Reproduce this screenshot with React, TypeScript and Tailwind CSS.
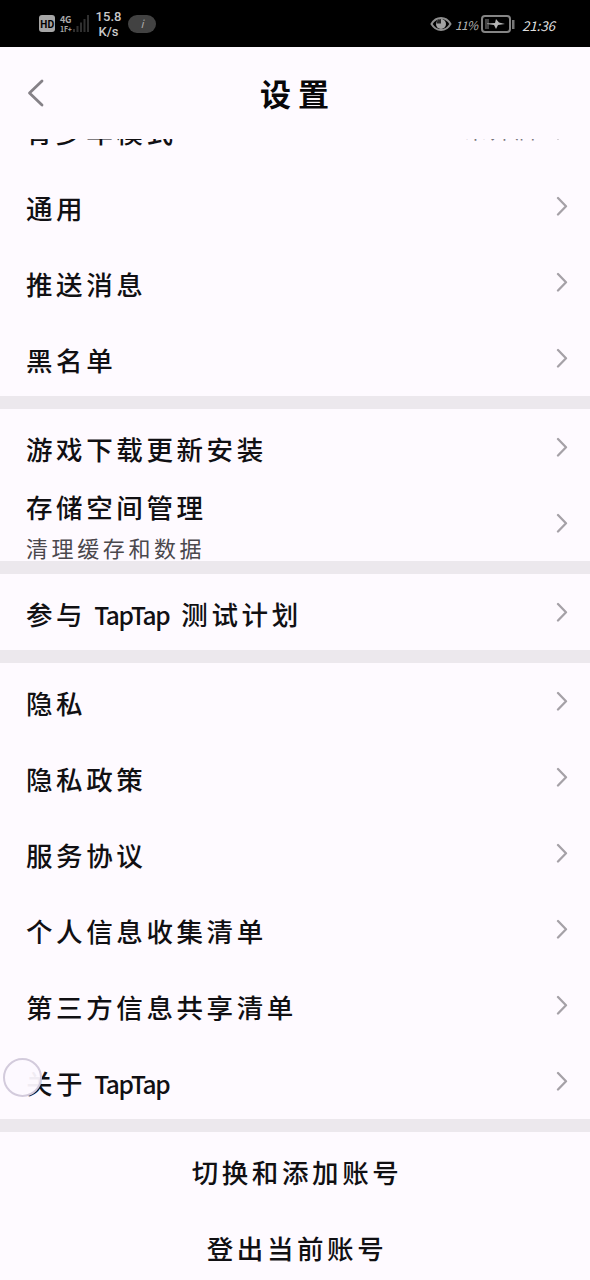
import { Fragment } from "react";

type Row = { label: string; desc?: string; value?: string };

const groups: Row[][] = [
  [{ label: "青少年模式", value: "未开启" }, { label: "通用" }, { label: "推送消息" }, { label: "黑名单" }],
  [{ label: "游戏下载更新安装" }, { label: "存储空间管理", desc: "清理缓存和数据" }],
  [{ label: "参与 TapTap 测试计划" }],
  [
    { label: "隐私" },
    { label: "隐私政策" },
    { label: "服务协议" },
    { label: "个人信息收集清单" },
    { label: "第三方信息共享清单" },
    { label: "关于 TapTap" },
  ],
];

const actions = ["切换和添加账号", "登出当前账号"];

function Chevron() {
  return (
    <svg width="12" height="20" viewBox="0 0 12 20" fill="none" className="shrink-0">
      <path d="M2 2 10 10.300 2 18.500" stroke="#a5a1a7" strokeWidth="2.300" strokeLinecap="round" strokeLinejoin="round" />
    </svg>
  );
}

function Label({ text }: { text: string }) {
  const parts = text.split(/ ?(TapTap) ?/);
  return (
    <span className="flex items-baseline text-[26.5px] leading-[36px] font-medium tracking-[3.6px] whitespace-nowrap text-[#111013]">
      {parts.map((part, i) =>
        part === "TapTap" ? (
          <span key={i} className="mr-3 ml-2 text-[24.5px] tracking-[-1.4px]">
            {part}
          </span>
        ) : (
          <span key={i}>{part}</span>
        )
      )}
    </span>
  );
}

function SettingsRow({ label, desc, value }: Row) {
  return (
    <div className="flex h-[76px] shrink-0 items-center pr-[22px] pl-[26px]">
      <div className={desc ? "flex-1 pt-2" : "flex-1 pt-1"}>
        <Label text={label} />
        {desc && (
          <p className="mt-1 text-[22px] leading-[36px] tracking-[3.6px] text-[#4b484d]">{desc}</p>
        )}
      </div>
      {value && <span className="mr-4 text-[21px] tracking-[4px] text-[#77737a]">{value}</span>}
      <Chevron />
    </div>
  );
}

function StatusBar() {
  return (
    <div className="flex h-[47px] shrink-0 items-center bg-black text-[#c9c9c9]">
      <span className="ml-[39px] flex h-[17px] w-4 items-center justify-center rounded-[3px] bg-[#a6a6a6] text-[10px] font-bold tracking-tight text-black">
        HD
      </span>
      <div className="ml-[5px] flex w-3 flex-col text-[9px] leading-[11px] font-bold tracking-tight text-[#a8a8a8]">
        <span>4G</span>
        <span className="text-[7px] leading-[8px]">1F+</span>
      </div>
      <svg width="17" height="19" viewBox="0 0 17 19" fill="#303030">
        <rect x="1" y="15" width="2" height="3" />
        <rect x="4.500" y="12" width="2" height="6" />
        <rect x="8" y="8.500" width="2" height="9.500" />
        <rect x="11.500" y="5" width="2" height="13" />
        <rect x="15" y="1" width="2" height="17" />
      </svg>
      <div className="ml-[5px] w-[29px] text-center font-[Roboto,sans-serif] text-[13px] leading-[15px] font-medium">
        <p>15.8</p>
        <p>K/s</p>
      </div>
      <span className="ml-[5px] flex h-[18px] w-7 items-center justify-center rounded-full bg-[#424242] text-[11px] italic text-[#aaa]">
        i
      </span>
      <svg width="22" height="16" viewBox="0 0 22 16" fill="none" className="ml-auto">
        <path d="M1.500 8Q5 2 11 2T20.500 8Q17 14 11 14T1.500 8Z" stroke="#8e8e8e" strokeWidth="2" />
        <circle cx="11" cy="8" r="5" fill="#a3a3a3" />
        <path d="M11 3v4.500H6.500A5 5 0 0 1 11 3Z" fill="#222" />
      </svg>
      <span className="mt-0.5 ml-[3px] w-[22px] text-[12px] tracking-[-0.6px] whitespace-nowrap italic text-[#b5b5b5]">11%</span>
      <svg width="34" height="18" viewBox="0 0 34 18" fill="none" className="ml-1">
        <rect x="1" y="1" width="28" height="16" rx="3" stroke="#858585" strokeWidth="2" />
        <rect x="4" y="4" width="4" height="10" fill="#444" />
        <path d="m6 8.500 8-.500 1-4 3 3.500 6 1.500-7 1-2 4-2-4-7-1Z" fill="#b5b5b5" />
        <rect x="31" y="5" width="2.500" height="9" fill="#777" />
      </svg>
      <span className="mt-[3px] mr-[34px] ml-[7px] w-[34px] text-[13.5px] tracking-[-0.2px] whitespace-nowrap italic text-[#dedede]">21:36</span>
    </div>
  );
}

export default function App() {
  return (
    <div className="relative flex h-[1280px] w-[590px] flex-col overflow-hidden bg-[#fefaff] font-['Noto_Sans_CJK_SC',sans-serif]">
      <StatusBar />
      <header className="grid h-[92px] shrink-0 grid-cols-[1fr_auto_1fr] items-center">
        <svg width="18" height="28" viewBox="0 0 18 28" fill="none" className="ml-[27px]">
          <path d="M15 2 2.500 14 15 26" stroke="#858187" strokeWidth="2.800" strokeLinecap="round" strokeLinejoin="round" />
        </svg>
        <h1 className="pl-1.5 text-[31px] font-bold tracking-[7px] text-[#080709]">设置</h1>
      </header>

      {/* list is scrolled, so its first row sits partly under the header */}
      <main className="flex min-h-0 flex-1 flex-col overflow-hidden">
        <div className="-mt-[47px] flex flex-col">
          {groups.map((rows, i) => (
            <Fragment key={i}>
              {rows.map((row) => (
                <SettingsRow key={row.label} {...row} />
              ))}
              <div className="h-[13px] shrink-0 bg-[#ece8ed]" />
            </Fragment>
          ))}
          {actions.map((action) => (
            <button key={action} className="flex h-[76px] shrink-0 items-center justify-center pt-1 pl-1">
              <Label text={action} />
            </button>
          ))}
        </div>
      </main>

      {/* touch indicator */}
      <div className="absolute top-[1058px] left-[3px] size-[39px] rounded-full border-2 border-[#d3cbdc] bg-[#fdf9ff]/95" />
    </div>
  );
}
